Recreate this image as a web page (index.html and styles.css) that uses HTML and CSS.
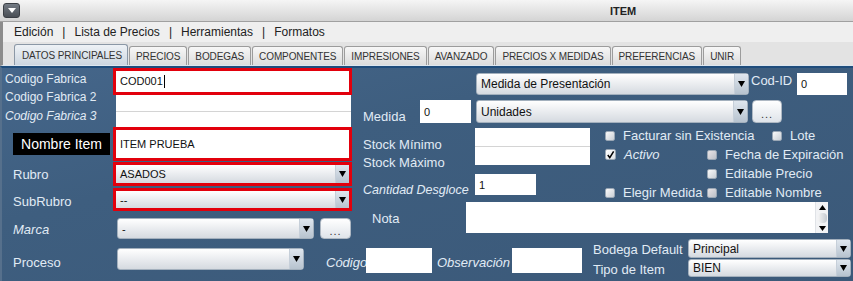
FILE: index.html
```html
<!DOCTYPE html>
<html lang="es">
  <head>
    <meta charset="UTF-8" />
    <meta name="viewport" content="width=device-width, initial-scale=1.0" />
    <title>ITEM</title>
    <link rel="stylesheet" href="styles.css">
  </head>
  <body>
    <section class="window">
      <header class="titlebar">
        <span class="sysbtn">
          <svg width="8" height="6" viewBox="0 0 8 6"><path d="M0 0 H8 L4 5 Z" fill="#fff"/></svg>
        </span>
        <span class="title">ITEM</span>
      </header>
      <nav class="menubar">
        <span>Edición</span><span class="sep">|</span>
        <span>Lista de Precios</span><span class="sep">|</span>
        <span>Herramientas</span><span class="sep">|</span>
        <span>Formatos</span>
      </nav>
      <div class="tabstrip">
        <span class="tab active">DATOS PRINCIPALES</span>
        <span class="tab">PRECIOS</span>
        <span class="tab">BODEGAS</span>
        <span class="tab">COMPONENTES</span>
        <span class="tab">IMPRESIONES</span>
        <span class="tab">AVANZADO</span>
        <span class="tab">PRECIOS X MEDIDAS</span>
        <span class="tab">PREFERENCIAS</span>
        <span class="tab">UNIR</span>
      </div>

      <section class="panel">
        <div class="top">
          <!-- left: codes, name, rubro -->
          <div class="left">
            <div class="labels">
              <span class="lbl cf1">Codigo Fabrica</span>
              <span class="lbl cf2">Codigo Fabrica 2</span>
              <span class="lbl cf3">Codigo Fabrica 3</span>
              <span class="nombre">Nombre Item</span>
              <span class="lbl rubro">Rubro</span>
              <span class="lbl subrubro">SubRubro</span>
              <span class="lbl marca">Marca</span>
            </div>
            <div class="fields">
              <div class="redbox code1"><span class="field">COD001<i class="caret"></i></span></div>
              <span class="field plain code2"></span>
              <span class="field plain code3"></span>
              <div class="redbox name"><span class="field">ITEM PRUEBA</span></div>
              <div class="redbox rubro-box">
                <div class="combo flat"><span class="val">ASADOS</span><span class="arr"><svg width="7" height="6" viewBox="0 0 7 6"><path d="M0 0 H7 L3.5 6 Z"/></svg></span></div>
              </div>
              <div class="redbox subrubro-box">
                <div class="combo flat"><span class="val">--</span><span class="arr"><svg width="7" height="6" viewBox="0 0 7 6"><path d="M0 0 H7 L3.5 6 Z"/></svg></span></div>
              </div>
              <div class="marca-row">
                <div class="combo marca-combo"><span class="val">-</span><span class="arr"><svg width="7" height="6" viewBox="0 0 7 6"><path d="M0 0 H7 L3.5 6 Z"/></svg></span></div>
                <span class="dots">...</span>
              </div>
            </div>
          </div>

          <!-- right: medidas, stock, flags, nota -->
          <div class="right">
            <div class="row-a">
              <div class="combo big presentacion"><span class="val">Medida de Presentación</span><span class="arr"><svg width="7" height="6" viewBox="0 0 7 6"><path d="M0 0 H7 L3.5 6 Z"/></svg></span></div>
              <span class="lbl codid">Cod-ID</span>
              <span class="field codid-field">0</span>
            </div>
            <div class="row-b">
              <span class="lbl medida">Medida</span>
              <span class="field medida-field">0</span>
              <div class="combo big unidades"><span class="val">Unidades</span><span class="arr"><svg width="7" height="6" viewBox="0 0 7 6"><path d="M0 0 H7 L3.5 6 Z"/></svg></span></div>
              <span class="dots unidades-btn">...</span>
            </div>
            <div class="row-c">
              <div class="stock-labels">
                <span class="lbl smin">Stock Mínimo</span>
                <span class="lbl smax">Stock Máximo</span>
                <span class="lbl desg">Cantidad Desgloce</span>
              </div>
              <div class="stock-fields">
                <span class="field smin-f"></span>
                <span class="field smax-f"></span>
                <span class="field desg-f">1</span>
              </div>
              <div class="checks">
                <label class="chk"><i class="box"></i>Facturar sin Existencia</label>
                <label class="chk lote"><i class="box"></i>Lote</label>
                <label class="chk it"><i class="box on"><svg width="10" height="10" viewBox="0 0 10 10"><path d="M2 5 L4.2 8 L8.5 1" fill="none" stroke="#000" stroke-width="1.7"/></svg></i>Activo</label>
                <label class="chk"><i class="box dim"></i>Fecha de Expiración</label>
                <span></span>
                <label class="chk"><i class="box"></i>Editable Precio</label>
                <label class="chk"><i class="box"></i>Elegir Medida</label>
                <label class="chk"><i class="box dim"></i>Editable Nombre</label>
              </div>
            </div>
            <div class="row-d">
              <span class="lbl nota">Nota</span>
              <div class="textarea">
                <span class="scroll">
                  <svg width="7" height="5" viewBox="0 0 7 5"><path d="M0 5 H7 L3.5 0 Z"/></svg>
                  <i class="thumb"></i>
                  <svg width="7" height="5" viewBox="0 0 7 5"><path d="M0 0 H7 L3.5 5 Z"/></svg>
                </span>
              </div>
            </div>
          </div>
        </div>

        <!-- bottom row -->
        <div class="bottom">
          <span class="lbl proceso">Proceso</span>
          <div class="combo proceso-combo"><span class="val"></span><span class="arr"><svg width="7" height="6" viewBox="0 0 7 6"><path d="M0 0 H7 L3.5 6 Z"/></svg></span></div>
          <span class="lbl it codigo">Código</span>
          <span class="field codigo-f"></span>
          <span class="lbl it obs">Observación</span>
          <span class="field obs-f"></span>
          <div class="bodega">
            <span class="lbl">Bodega Default</span>
            <div class="combo big"><span class="val">Principal</span><span class="arr"><svg width="7" height="6" viewBox="0 0 7 6"><path d="M0 0 H7 L3.5 6 Z"/></svg></span></div>
            <span class="lbl">Tipo de Item</span>
            <div class="combo big"><span class="val">BIEN</span><span class="arr"><svg width="7" height="6" viewBox="0 0 7 6"><path d="M0 0 H7 L3.5 6 Z"/></svg></span></div>
          </div>
        </div>
      </section>
    </section>
  </body>
</html>
```

FILE: styles.css
```css
body {
  margin: 0;
  font-family: "Liberation Sans", Arial, sans-serif;
}
.window {
  width: 853px;
  height: 281px;
  overflow: hidden;
  display: flex;
  flex-direction: column;
  background: #3d5c7c;
}

/* title bar */
.titlebar {
  height: 22px;
  box-sizing: border-box;
  display: flex;
  align-items: center;
  background: linear-gradient(#f5f5f5, #d4d4d4);
  border-bottom: 1px solid #a0a0a0;
}
.sysbtn {
  width: 17px;
  height: 15px;
  margin-left: 3px;
  box-sizing: border-box;
  border: 1px solid #3b3f45;
  border-radius: 3px;
  background: linear-gradient(#737a83, #4a4f56);
  display: flex;
  align-items: center;
  justify-content: center;
}
.title {
  margin-left: 590px;
  font: bold 11px "Liberation Sans", Arial, sans-serif;
  color: #222;
}

/* menu */
.menubar {
  height: 20px;
  display: flex;
  align-items: center;
  padding-left: 11px;
  border-left: 3px solid #8c8c8c;
  background: #efefef;
  font-size: 12px;
  color: #222;
}
.menubar .sep {
  margin: 0 9px;
}

/* tabs */
.tabstrip {
  height: 24px;
  box-sizing: border-box;
  display: flex;
  align-items: flex-end;
  gap: 1px;
  padding-left: 11px;
  border-left: 3px solid #8c8c8c;
  border-bottom: 1px solid #dde6ef;
  background: #e3e3e3;
}
.tab {
  height: 19px;
  box-sizing: border-box;
  padding: 0 6px;
  display: flex;
  align-items: center;
  border: 1px solid #9c9c9c;
  border-bottom: none;
  border-radius: 3px 3px 0 0;
  background: linear-gradient(#f7f7f7, #dcdcdc);
  font-size: 10px;
  letter-spacing: -0.1px;
  color: #333;
}
.tab.active {
  height: 21px;
  padding: 0 5px 0 7px;
  border-color: #8b98a6;
  background: linear-gradient(#eef2f6, #ccd6e0);
}

/* panel */
.panel {
  flex-grow: 1;
  border-top: 2px solid #1f4d7c;
  border-left: 2px solid #56708c;
  background: linear-gradient(165deg, #45668a 0%, #3e5e7f 35%, #3b5979 100%);
}
.top {
  height: 171px;
  display: flex;
}
.lbl {
  display: block;
  line-height: 18px;
  font-size: 13px;
  color: #e1ebf5;
  white-space: nowrap;
}
.it {
  font-style: italic;
}
.field {
  display: flex;
  align-items: center;
  box-sizing: border-box;
  padding-left: 4px;
  background: #fff;
  font-size: 11px;
  color: #111;
}
.caret {
  width: 1px;
  height: 13px;
  margin-left: 1px;
  background: #000;
}

/* combos and buttons */
.combo {
  display: flex;
  align-items: center;
  box-sizing: border-box;
  border: 1px solid #a3b0bd;
  border-radius: 3px;
  background: linear-gradient(#ffffff, #eceef1 45%, #d5dae0);
  font-size: 11px;
  color: #111;
}
.combo.big {
  font-size: 12px;
}
.combo .val {
  flex-grow: 1;
  padding-left: 4px;
}
.combo .arr {
  width: 13px;
  align-self: stretch;
  display: flex;
  align-items: center;
  justify-content: center;
  border-left: 1px solid #c6cfd9;
  background: linear-gradient(#dfe6ee, #b7c3cf);
}
.combo.flat {
  height: 100%;
  border: none;
  border-radius: 0;
}
.dots {
  display: flex;
  justify-content: center;
  align-items: center;
  box-sizing: border-box;
  padding-top: 4px;
  border: 1px solid #aeb8c3;
  border-radius: 4px;
  background: linear-gradient(#ffffff, #dfe4ea);
  font-size: 11px;
  letter-spacing: 1px;
  color: #333;
}

/* left block */
.left {
  width: 350px;
  display: flex;
}
.labels {
  width: 111px;
  display: flex;
  flex-direction: column;
}
.labels .lbl {
  font-size: 12px;
  padding-left: 11px;
}
.labels .cf1 {
  margin-top: 2px;
  padding-left: 3px;
}
.labels .cf2 {
  padding-left: 3px;
}
.labels .cf3 {
  margin-top: 1px;
  padding-left: 3px;
  font-style: italic;
}
.nombre {
  width: 97px;
  height: 28px;
  margin: 8px 0 0 11px;
  display: flex;
  align-items: center;
  justify-content: center;
  background: #000;
  color: #fff;
  font-size: 14px;
}
.labels .rubro {
  margin-top: 11px;
  font-size: 13px;
}
.labels .subrubro {
  margin-top: 9px;
  font-size: 13px;
}
.labels .marca {
  margin-top: 10px;
  font-size: 13px;
  font-style: italic;
}
.fields {
  width: 239px;
  display: flex;
  flex-direction: column;
}
.redbox {
  box-sizing: border-box;
  border: 3px solid #e2000c;
  background: #fff;
}
.redbox .field {
  height: 100%;
}
.code1 {
  height: 27px;
}
.plain {
  margin-left: 3px;
  width: 235px;
}
.code2 {
  height: 17px;
}
.code3 {
  height: 16px;
  border-top: 1px solid #d4d4d4;
}
.name {
  height: 35px;
}
.rubro-box {
  height: 24px;
  margin-top: 1px;
}
.subrubro-box {
  height: 24px;
  margin-top: 2px;
}
.marca-row {
  margin-top: 7px;
  height: 21px;
  display: flex;
}
.marca-combo {
  margin-left: 4px;
  width: 197px;
}
.marca-row .dots {
  margin-left: 6px;
  width: 31px;
}

/* right block */
.right {
  width: 499px;
  padding-left: 11px;
}
.row-a {
  margin-top: 5px;
  height: 22px;
  display: flex;
}
.presentacion {
  margin-left: 113px;
  width: 273px;
}
.codid {
  width: 46px;
  margin-left: 2px;
  line-height: 16px;
}
.codid-field {
  width: 50px;
}
.row-b {
  margin-top: 5px;
  height: 23px;
  display: flex;
}
.medida {
  width: 57px;
  margin-top: 8px;
}
.medida-field {
  width: 51px;
}
.unidades {
  margin-left: 5px;
  width: 272px;
}
.unidades-btn {
  margin-left: 4px;
  width: 30px;
}
.row-c {
  margin-top: 3px;
  height: 76px;
  display: flex;
}
.stock-labels {
  width: 112px;
}
.smin {
  margin-top: 10px;
}
.desg {
  margin-top: 9px;
  font-size: 12.5px;
  font-style: italic;
}
.stock-fields {
  width: 115px;
  display: flex;
  flex-direction: column;
}
.smin-f {
  margin-top: 2px;
  height: 18px;
}
.smax-f {
  height: 19px;
  border-top: 1px solid #d4d4d4;
}
.desg-f {
  margin-top: 9px;
  width: 61px;
  height: 21px;
}
.checks {
  margin-left: 14px;
  display: grid;
  grid-template-columns: 102px auto;
  grid-template-rows: repeat(4, 19px);
}
.chk {
  display: flex;
  align-items: center;
  white-space: nowrap;
  font-size: 13px;
  color: #e1ebf5;
}
.chk.lote {
  margin-left: 65px;
}
.box {
  width: 10px;
  height: 10px;
  margin: 0 8px 0 1px;
  flex-shrink: 0;
  box-sizing: border-box;
  border: 1px solid #9aa7b5;
  border-radius: 2px;
  background: linear-gradient(135deg, #fafafa, #c9cfd6);
  display: flex;
}
.box.on {
  width: 11px;
  height: 11px;
  background: linear-gradient(135deg, #ffffff, #dde2e7);
}
.box.dim {
  background: linear-gradient(135deg, #e9e4e6, #bcc0c8);
}
.row-d {
  height: 31px;
  display: flex;
}
.nota {
  width: 103px;
  margin-top: 8px;
  padding-left: 9px;
  box-sizing: border-box;
}
.textarea {
  width: 362px;
  display: flex;
  justify-content: flex-end;
  background: #fff;
}
.scroll {
  width: 13px;
  display: flex;
  flex-direction: column;
  align-items: center;
  justify-content: space-between;
  padding: 3px 0 2px;
  box-sizing: border-box;
  background: #f2f3f5;
  border-left: 1px solid #e0e3e7;
}
.thumb {
  width: 9px;
  height: 10px;
  border-radius: 4px;
  background: linear-gradient(90deg, #f4f4f4, #c6cbd1);
}

/* bottom row */
.bottom {
  display: flex;
  align-items: flex-start;
}
.proceso {
  width: 104px;
  padding-left: 11px;
  margin-top: 15px;
}
.proceso-combo {
  margin-top: 9px;
  width: 187px;
  height: 22px;
}
.codigo {
  width: 40px;
  margin: 15px 0 0 22px;
}
.codigo-f {
  margin-top: 9px;
  width: 66px;
  height: 25px;
}
.obs {
  width: 75px;
  margin: 15px 0 0 5px;
}
.obs-f {
  margin-top: 9px;
  width: 70px;
  height: 25px;
}
.bodega {
  margin-left: 11px;
  display: grid;
  grid-template-columns: 95px 163px;
  grid-template-rows: 19px 18px;
  row-gap: 1px;
}
.bodega .lbl {
  padding-top: 2px;
}
```
